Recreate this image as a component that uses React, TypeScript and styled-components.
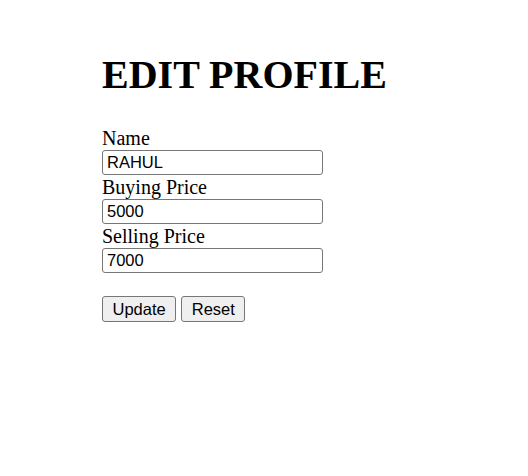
import React from "react";
import styled, { createGlobalStyle } from "styled-components";

const Global = createGlobalStyle`
  html, body { margin: 0; padding: 0; background: #ffffff; }
  body { font-family: "Liberation Serif", "Times New Roman", serif; color: #000; }
`;

const Page = styled.div`
  padding: 53px 0 0 102px;
  width: 528px;
  height: 476px;
  box-sizing: border-box;
  overflow: hidden;
`;

const Title = styled.h1`
  margin: 0 0 29px;
  font-size: 40px;
  line-height: 44px;
  font-weight: bold;
`;

const Form = styled.form`
  display: flex;
  flex-direction: column;
  align-items: flex-start;
`;

const Label = styled.label`
  display: block;
  font-size: 20px;
  line-height: 24px;
`;

const Input = styled.input`
  box-sizing: border-box;
  width: 221px;
  height: 25px;
  margin: 0;
  padding: 1px 4px;
  border: 1px solid #767676;
  border-radius: 3px;
  font-family: "Liberation Sans", Arial, sans-serif;
  font-size: 16.5px;
  color: #000;
  background: #fff;
  outline: none;
`;

const ButtonRow = styled.div`
  display: flex;
  gap: 5px;
  margin-top: 23px;
`;

const Button = styled.button`
  box-sizing: border-box;
  height: 26px;
  margin: 0;
  padding: 0 9.5px;
  border: 1px solid #767676;
  border-radius: 3px;
  background: #efefef;
  font-family: "Liberation Sans", Arial, sans-serif;
  font-size: 16.5px;
  color: #000;
`;

export default function App() {
  return (
    <Page>
      <Global />
      <Title>EDIT PROFILE</Title>
      <Form onSubmit={(e) => e.preventDefault()}>
        <Label htmlFor="name">Name</Label>
        <Input id="name" defaultValue="RAHUL" />
        <Label htmlFor="buy">Buying Price</Label>
        <Input id="buy" defaultValue="5000" />
        <Label htmlFor="sell">Selling Price</Label>
        <Input id="sell" defaultValue="7000" />
        <ButtonRow>
          <Button type="submit">Update</Button>
          <Button type="reset">Reset</Button>
        </ButtonRow>
      </Form>
    </Page>
  );
}
